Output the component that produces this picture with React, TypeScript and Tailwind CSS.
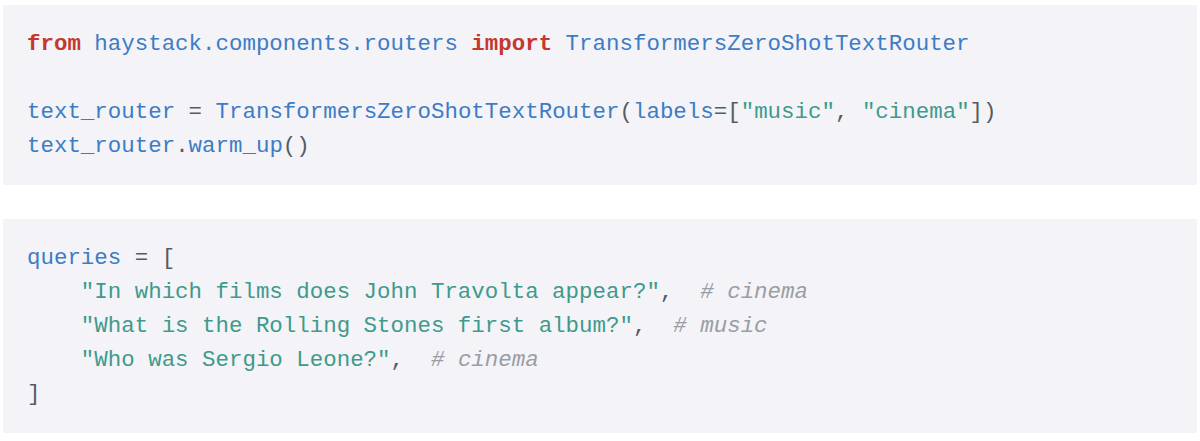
import React from "react"

type Tok = [string, string]

const KW = "text-[#c4382d] font-bold"
const ID = "text-[#3d7cc4]"
const STR = "text-[#3f9a8b]"
const P = "text-[#555b61]"
const CM = "text-[#9a9ea3] italic"

const block1: Tok[][] = [
  [
    ["from", KW],
    [" haystack.components.routers ", ID],
    ["import", KW],
    [" TransformersZeroShotTextRouter", ID],
  ],
  [],
  [
    ["text_router", ID],
    [" = ", P],
    ["TransformersZeroShotTextRouter", ID],
    ["(", P],
    ["labels", ID],
    ["=[", P],
    ['"music"', STR],
    [", ", P],
    ['"cinema"', STR],
    ["])", P],
  ],
  [
    ["text_router", ID],
    [".", P],
    ["warm_up", ID],
    ["()", P],
  ],
]

const block2: Tok[][] = [
  [
    ["queries", ID],
    [" = [", P],
  ],
  [
    ["    ", P],
    ['"In which films does John Travolta appear?"', STR],
    [",  ", P],
    ["# cinema", CM],
  ],
  [
    ["    ", P],
    ['"What is the Rolling Stones first album?"', STR],
    [",  ", P],
    ["# music", CM],
  ],
  [
    ["    ", P],
    ['"Who was Sergio Leone?"', STR],
    [",  ", P],
    ["# cinema", CM],
  ],
  [["]", P]],
]

function CodeBlock({ lines }: { lines: Tok[][] }) {
  return (
    <pre className="bg-[#f3f3f8] px-6 py-[22px] text-[22.45px] leading-[34px] font-['Liberation_Mono',monospace] whitespace-pre">
      {lines.map((line, i) => (
        <div key={i} className="h-[34px]">
          {line.map(([t, c], j) => (
            <span key={j} className={c}>
              {t}
            </span>
          ))}
        </div>
      ))}
    </pre>
  )
}

export default function App() {
  return (
    <div className="min-h-[441px] bg-white px-[3px] pt-[5px] flex flex-col gap-[34px]">
      <CodeBlock lines={block1} />
      <CodeBlock lines={block2} />
    </div>
  )
}
